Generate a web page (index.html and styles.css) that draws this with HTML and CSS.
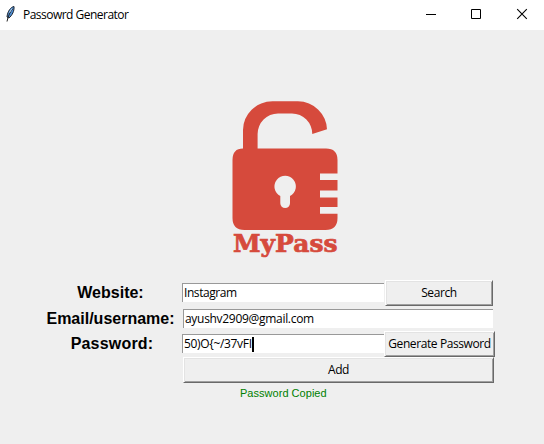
FILE: index.html
```html
<!DOCTYPE html>
<html lang="en">
<head>
<meta charset="utf-8">
<title>Passowrd Generator</title>
<link rel="stylesheet" href="styles.css">
</head>
<body>
<header class="titlebar">
  <svg class="feather" width="12" height="18" viewBox="0 0 12 18">
    <path d="M9 1.500C6 2 2.500 6 2 12L4 13C7 10.500 9.500 6 9 1.500Z" fill="#4f8fd6" stroke="#1b2430" stroke-width="1"/>
    <path d="M8 3.500C5.500 6 3 11 2 16.500" fill="none" stroke="#222" stroke-width="1"/>
    <path d="M7 3.500L4.500 7.500" stroke="#b8d8f5" stroke-width="1"/>
  </svg>
  <span class="title">Passowrd Generator</span>
  <svg class="controls" width="135" height="30" viewBox="0 0 135 30" fill="none" stroke="#000">
    <path d="M17 14.500H27M62.500 9.500H71.500V18.500H62.500Z"/>
    <path d="M108.200 9.200L117.800 18.800M117.800 9.200L108.200 18.800" stroke-width="1.100"/>
  </svg>
</header>
<main class="content">
  <svg class="logo" width="120" height="166" viewBox="225 98 120 166">
    <path fill="#d64a3c" fill-rule="evenodd" d="M243 148.500V130A29.500 28.700 0 0 1 272.500 101.300H298A29.500 28.700 0 0 1 327 129.300L312.300 134A20.500 20.500 0 0 0 292 113.500H278A20.400 20.500 0 0 0 257.600 134V148.500H326Q337.500 148.500 337.500 160V173.500H320V180H337.500V190.500H320V197.500H337.500V207H320V213.800H337.500V218Q337.500 230 325.500 230H244.500Q232.500 230 232.500 218V160Q232.500 148.500 243 148.500ZM280.300 196V203.200A4.850 4.850 0 0 0 290 203.200V196A10.700 10.700 0 1 0 280.300 196Z"/>
    <text class="brand" x="233" y="252.200" textLength="104.500" lengthAdjust="spacingAndGlyphs">MyPass</text>
  </svg>
  <form class="form">
    <div class="row website">
      <label>Website:</label>
      <div class="entry short"><span class="t-web">Instagram</span></div>
      <button type="button" class="search"><span>Search</span></button>
    </div>
    <div class="row email">
      <label>Email/username:</label>
      <div class="entry long"><span class="t-mail">ayushv2909@gmail.com</span></div>
    </div>
    <div class="row password">
      <label>Password:</label>
      <div class="entry short"><span class="t-pass">50)O{~/37vFI</span><i class="caret"></i></div>
      <button type="button" class="generate"><span>Generate Password</span></button>
    </div>
    <button type="button" class="add"><span>Add</span></button>
    <p class="status">Password Copied</p>
  </form>
</main>
</body>
</html>
```

FILE: styles.css
```css
* { box-sizing: border-box; }
body {
  margin: 0;
  width: 544px;
  height: 444px;
  overflow: hidden;
  background: #efefef;
  color: #000;
  font: 12px/16px "Open Sans", "Noto Sans", sans-serif;
}
.titlebar {
  display: flex;
  align-items: center;
  height: 30px;
  padding-left: 5px;
  background: #fff;
}
.feather { margin: -2px 6px 0 0; }
.title { letter-spacing: -0.52px; white-space: nowrap; }
.controls { margin-left: auto; }
.content { height: 414px; padding-top: 68px; }
.logo { display: block; margin-left: 225px; }
.brand {
  font: bold 23.5px "DejaVu Serif", serif;
  fill: #d64a3c;
  stroke: #d64a3c;
  stroke-width: 0.7px;
}
.form { margin-top: 16px; }
.row { display: flex; }
label {
  flex: none;
  width: 139px;
  margin-left: 41px;
  text-align: center;
  font: bold 16px/20px "Liberation Sans", sans-serif;
}
.entry {
  display: flex;
  align-items: center;
  flex: none;
  height: 19px;
  padding-left: 1px;
  background: #fff;
  border-top: 1px solid #999;
  border-left: 1px solid #999;
  white-space: nowrap;
}
.short { width: 202px; margin-left: 2px; }
.long { width: 310px; margin-left: 3px; }
.t-web { letter-spacing: -0.42px; }
.t-mail { letter-spacing: -0.3px; }
.t-pass { letter-spacing: -0.33px; }
.caret { width: 2px; height: 15px; background: #000; }
button {
  flex: none;
  height: 26px;
  padding: 0;
  color: #000;
  background: #efefef;
  border: 1px solid;
  border-color: #fff #696969 #696969 #fff;
  border-radius: 0;
  box-shadow: inset 1px 1px #e3e3e3, inset -1px -1px #a0a0a0;
  font: inherit;
  letter-spacing: -0.4px;
  white-space: nowrap;
}
.website { height: 29px; }
.website label, .website .entry { margin-top: 3px; }
.email { height: 22px; }
.search { width: 108px; margin-left: 1px; }
.password { height: 26px; }
.password label, .password .entry { margin-top: 3px; }
.password label { padding-left: 3px; letter-spacing: 0.2px; }
.generate { width: 111px; }
.add { display: block; width: 311px; margin-left: 183px; }
.status {
  width: 86px;
  margin: 4px 0 0 240px;
  color: #008000;
  font: 11px/13px "Liberation Sans", sans-serif;
  letter-spacing: 0.03px;
  white-space: nowrap;
}
```
